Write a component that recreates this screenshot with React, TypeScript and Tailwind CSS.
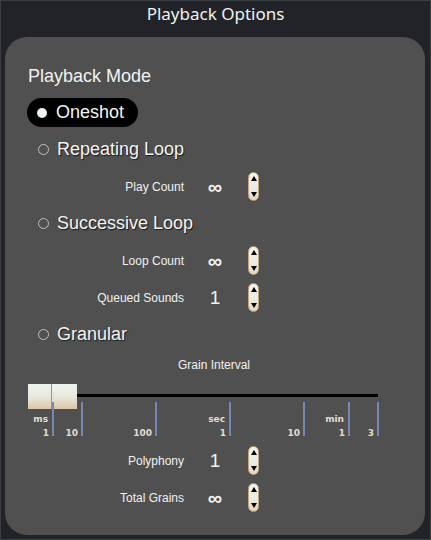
import React from "react";

const Spinner = () => (
  <div className="flex h-[29px] w-[11px] flex-col items-center justify-between rounded-full border border-[#c9a57e] bg-gradient-to-b from-[#eef3ee] via-[#e8eee6] to-[#e4d8c2] py-[3px]">
    <div className="h-0 w-0 border-x-[3px] border-b-[5px] border-x-transparent border-b-black" />
    <div className="h-0 w-0 border-x-[3px] border-t-[5px] border-x-transparent border-t-black" />
  </div>
);

const ValueRow = ({ label, value }: { label: string; value: string }) => (
  <div className="flex h-[37px] items-center">
    <div className="w-[179px] text-right text-[12px] text-[#f0f0f0]">{label}</div>
    <div
      className={
        "w-[62px] text-center text-[#f2f2f2] " +
        (value === "∞" ? "text-[20px] font-bold leading-none" : "text-[19px] leading-none")
      }
    >
      {value}
    </div>
    <div className="ml-[2px]">
      <Spinner />
    </div>
  </div>
);

const RadioRow = ({ label }: { label: string }) => (
  <div className="flex h-[37px] items-center pl-[33px]">
    <div className="h-[11px] w-[11px] rounded-full border border-[#c8bfb4]" />
    <div className="ml-[8px] text-[18px] text-[#f4f4f4] [text-shadow:1px_1px_1px_#1a1a1a]">{label}</div>
  </div>
);

const ticks = [24, 53, 127, 201, 275, 320, 349];
const unitLabels = [
  { text: "ms", right: 24 },
  { text: "sec", right: 201 },
  { text: "min", right: 320 },
];
const numLabels = [
  { text: "1", right: 24 },
  { text: "10", right: 53 },
  { text: "100", right: 127 },
  { text: "1", right: 201 },
  { text: "10", right: 275 },
  { text: "1", right: 320 },
  { text: "3", right: 349 },
];

export default function App() {
  return (
    <div
      className="h-[540px] w-[431px] border border-[#3a3d42] bg-[#212328]"
      style={{ fontFamily: '"Liberation Sans", Arial, sans-serif' }}
    >
      <div className="flex h-[36px] justify-center pt-0">
        <div
          className="text-[17px] text-[#eef2f2]"
          style={{ fontFamily: '"Noto Sans", "Open Sans", sans-serif' }}
        >
          Playback Options
        </div>
      </div>
      <div className="mx-[4px] h-[498px] w-[420px] rounded-[22px] bg-[#505050] pt-[28px]">
        <div className="flex h-[22px] items-center pl-[23px] text-[18px] text-[#f2f2f2]">Playback Mode</div>
        <div className="mt-[11px] flex">
          <div className="ml-[22px] flex h-[29px] items-center rounded-full bg-black pl-[10px] pr-[14px]">
            <div className="h-[10px] w-[10px] rounded-full bg-[#eef4ee]" />
            <div className="ml-[9px] text-[18px] text-[#f4f4f4]">Oneshot</div>
          </div>
        </div>
        <div className="mt-[4px]">
          <RadioRow label="Repeating Loop" />
          <ValueRow label="Play Count" value="∞" />
          <RadioRow label="Successive Loop" />
          <ValueRow label="Loop Count" value="∞" />
          <ValueRow label="Queued Sounds" value="1" />
          <RadioRow label="Granular" />
        </div>
        <div className="mt-[1px] flex h-[22px] items-center justify-center pr-[2px] text-[12px] text-[#f0f0f0]">
          Grain Interval
        </div>
        <div className="relative ml-[23px] mt-[8px] h-[58px] w-[352px]">
          <div className="absolute left-[49px] top-[10px] h-[3px] w-[301px] bg-black" />
          <div className="absolute left-0 top-0 flex h-[25px] w-[49px] bg-gradient-to-b from-[#eef3ee] via-[#e8e8dc] to-[#dcc6a6]">
            <div className="h-full w-[24px] border-r border-[#b88a6a]" />
          </div>
          {ticks.map((x, i) => (
            <div
              key={i}
              className="absolute top-[18px] h-[34px] w-[2px] bg-[#7388b4]"
              style={{ left: x }}
            />
          ))}
          {unitLabels.map((l, i) => (
            <div
              key={i}
              className="absolute top-[31px] text-[9px] font-bold leading-none text-[#e4dccc]"
              style={{ right: 352 - l.right + 4, fontFamily: '"DejaVu Sans", sans-serif' }}
            >
              {l.text}
            </div>
          ))}
          {numLabels.map((l, i) => (
            <div
              key={i}
              className="absolute top-[45px] text-[9px] font-bold leading-none text-[#e4dccc]"
              style={{ right: 352 - l.right + 3, fontFamily: '"DejaVu Sans", sans-serif' }}
            >
              {l.text}
            </div>
          ))}
        </div>
        <ValueRow label="Polyphony" value="1" />
        <ValueRow label="Total Grains" value="∞" />
      </div>
    </div>
  );
}
